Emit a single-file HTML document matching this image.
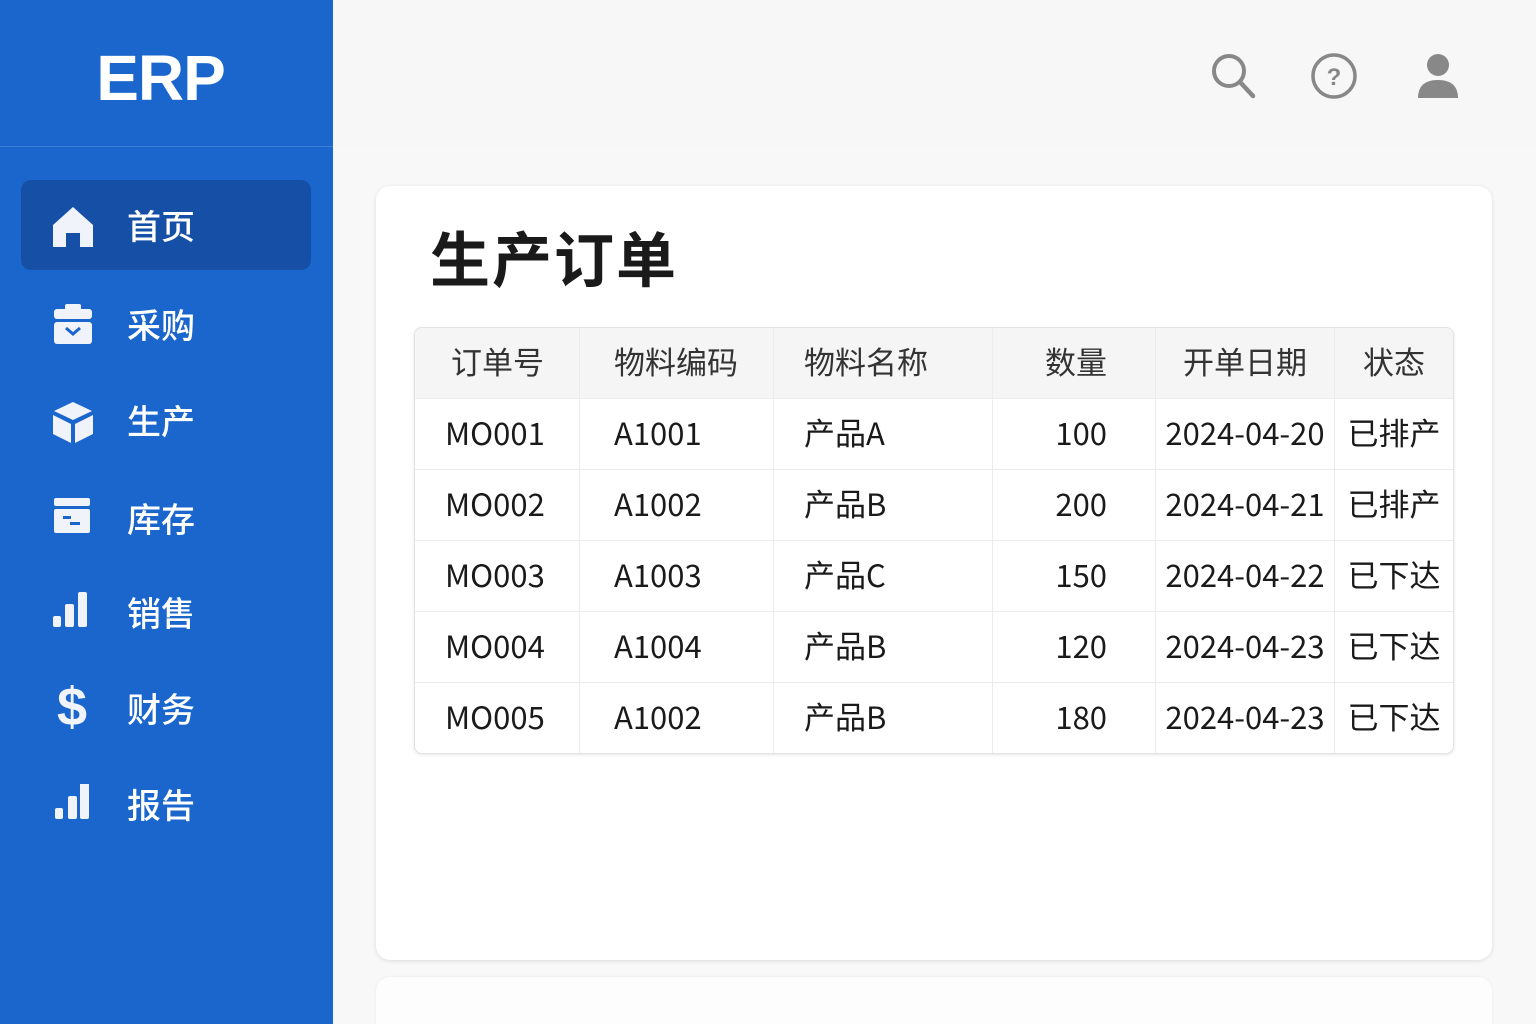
<!DOCTYPE html>
<html><head><meta charset="utf-8"><style>
*{margin:0;padding:0;box-sizing:border-box}
html,body{width:1536px;height:1024px;overflow:hidden}
body{background:#f8f8f8;font-family:"Liberation Sans","Noto Sans CJK SC",sans-serif;position:relative}
.side{position:absolute;left:0;top:0;width:333px;height:1024px;background:#1a66cc}
.logo{position:absolute;left:0;top:0;width:333px;height:147px;border-bottom:1px solid #3d7fd6;color:#fff;font-weight:bold;font-size:64px;text-align:center;line-height:156px;letter-spacing:-1px;padding-right:12px}
.item{position:absolute;left:21px;width:290px;height:90px}
.item.act{background:#1650a6;border-radius:10px}
.item svg{position:absolute;left:30px;top:25px}
.item span{position:absolute;left:106px;top:0;line-height:90px;font-size:34px;color:#fff;font-family:"Noto Sans CJK SC",sans-serif;font-weight:500}
.top{position:absolute;left:333px;top:0;right:0;height:147px;background:#f7f7f7}
.card{position:absolute;left:376px;top:186px;width:1116px;height:774px;background:#fff;border-radius:14px;box-shadow:0 1px 4px rgba(0,0,0,.12)}
.card2{position:absolute;left:376px;top:977px;width:1116px;height:47px;background:#fdfdfd;border-radius:14px 14px 0 0;box-shadow:0 0 3px rgba(0,0,0,.06)}
h1{position:absolute;left:430px;top:212px;font-size:60px;font-weight:bold;color:#1a1a1a;letter-spacing:2px;font-family:"Noto Sans CJK SC",sans-serif;line-height:90px}
table{position:absolute;left:414px;top:327px;width:1040px;border-collapse:separate;border-spacing:0;border:1px solid #e2e2e2;border-radius:8px;overflow:hidden;box-shadow:0 1px 3px rgba(0,0,0,.1)}
td,th{height:71px;font-size:31px;color:#1a1a1a;font-weight:normal;border-right:1px solid #ececec;border-top:1px solid #ececec;padding:0 0 4px 0;font-family:"Noto Sans CJK SC",sans-serif;line-height:40px}
th{background:#f5f5f5;color:#333;border-top:none;height:70px}
tr td:last-child,tr th:last-child{border-right:none}
.c1{width:165px;padding-left:30px;text-align:left}
.c2{width:194px;padding-left:34px}
.c3{width:219px;padding-left:30px}
.c4{width:163px;text-align:right;padding-right:48px}
.c5{width:179px;text-align:center}
.c6{text-align:center}
th.c1{padding-left:36px}
</style></head><body>
<div class="side">
<div class="logo">ERP</div>
<div class="item act" style="top:180px"><svg width="44" height="44" viewBox="0 0 44 44"><path d="M22 2 L42 20 V42 H29 V28 H15 V42 H2 V20 Z" fill="#f0f3fa"/></svg><span>首页</span></div>
<div class="item" style="top:279px"><svg width="44" height="44" viewBox="0 0 44 44"><rect x="14" y="0" width="16" height="7" rx="2" fill="#f0f3fa"/><rect x="3" y="5" width="38" height="10" rx="3" fill="#f0f3fa"/><rect x="3" y="18" width="38" height="22" rx="3" fill="#f0f3fa"/><path d="M15 24 L22 30 L29 24" stroke="#1a66cc" stroke-width="3" fill="none"/></svg><span>采购</span></div>
<div class="item" style="top:375px"><svg width="44" height="44" viewBox="0 0 44 44"><path d="M22 2 L41 11 L22 20 L3 11 Z" fill="#f0f3fa"/><path d="M2 15 L20 24 V43 L2 34 Z" fill="#f0f3fa"/><path d="M42 15 L24 24 V43 L42 34 Z" fill="#f0f3fa"/></svg><span>生产</span></div>
<div class="item" style="top:473px"><svg width="44" height="44" viewBox="0 0 44 44"><rect x="3" y="0" width="36" height="8" rx="2" fill="#f0f3fa"/><rect x="3" y="11" width="36" height="24" rx="2" fill="#f0f3fa"/><rect x="12" y="18" width="8" height="3" fill="#1a66cc"/><rect x="19" y="24" width="10" height="3" fill="#1a66cc"/></svg><span>库存</span></div>
<div class="item" style="top:567px"><svg width="44" height="44" viewBox="0 0 44 44"><rect x="2" y="24" width="8" height="11" rx="2" fill="#f0f3fa"/><rect x="14" y="12" width="9" height="23" rx="2" fill="#f0f3fa"/><rect x="27" y="0" width="9" height="35" rx="2" fill="#f0f3fa"/></svg><span>销售</span></div>
<div class="item" style="top:663px"><svg width="44" height="50" viewBox="0 0 44 50" style="top:18px"><text x="6" y="44" font-family="Liberation Sans" font-weight="bold" font-size="54" fill="#f0f3fa">$</text></svg><span>财务</span></div>
<div class="item" style="top:759px"><svg width="44" height="44" viewBox="0 0 44 44"><rect x="4" y="24" width="8" height="11" rx="2" fill="#f0f3fa"/><rect x="17" y="12" width="9" height="23" rx="2" fill="#f0f3fa"/><rect x="29" y="-1" width="9" height="36" rx="2" fill="#f0f3fa"/></svg><span>报告</span></div>
</div>
<div class="top">
<svg style="position:absolute;left:877px;top:52px" width="48" height="48" viewBox="0 0 48 48"><circle cx="19" cy="19" r="15" stroke="#888" stroke-width="4" fill="none"/><path d="M30 30 L43 44" stroke="#888" stroke-width="4.5" stroke-linecap="round"/></svg>
<svg style="position:absolute;left:977px;top:52px" width="48" height="48" viewBox="0 0 48 48"><circle cx="24" cy="24" r="21" stroke="#888" stroke-width="3.5" fill="none"/><text x="24" y="33" text-anchor="middle" font-family="Liberation Sans" font-weight="bold" font-size="24" fill="#888">?</text></svg>
<svg style="position:absolute;left:1083px;top:52px" width="44" height="48" viewBox="0 0 44 48"><circle cx="22" cy="13" r="11" fill="#888"/><path d="M2 46 Q2 28 22 28 Q42 28 42 46 Z" fill="#888"/></svg>
</div>
<div class="card"></div>
<div class="card2"></div>
<h1>生产订单</h1>
<table>
<tr><th class="c1">订单号</th><th class="c2" style="text-align:left">物料编码</th><th class="c3" style="text-align:left">物料名称</th><th class="c4">数量</th><th class="c5">开单日期</th><th class="c6">状态</th></tr>
<tr><td class="c1">MO001</td><td class="c2">A1001</td><td class="c3">产品A</td><td class="c4">100</td><td class="c5">2024-04-20</td><td class="c6">已排产</td></tr>
<tr><td class="c1">MO002</td><td class="c2">A1002</td><td class="c3">产品B</td><td class="c4">200</td><td class="c5">2024-04-21</td><td class="c6">已排产</td></tr>
<tr><td class="c1">MO003</td><td class="c2">A1003</td><td class="c3">产品C</td><td class="c4">150</td><td class="c5">2024-04-22</td><td class="c6">已下达</td></tr>
<tr><td class="c1">MO004</td><td class="c2">A1004</td><td class="c3">产品B</td><td class="c4">120</td><td class="c5">2024-04-23</td><td class="c6">已下达</td></tr>
<tr><td class="c1">MO005</td><td class="c2">A1002</td><td class="c3">产品B</td><td class="c4">180</td><td class="c5">2024-04-23</td><td class="c6">已下达</td></tr>
</table>
</body></html>
